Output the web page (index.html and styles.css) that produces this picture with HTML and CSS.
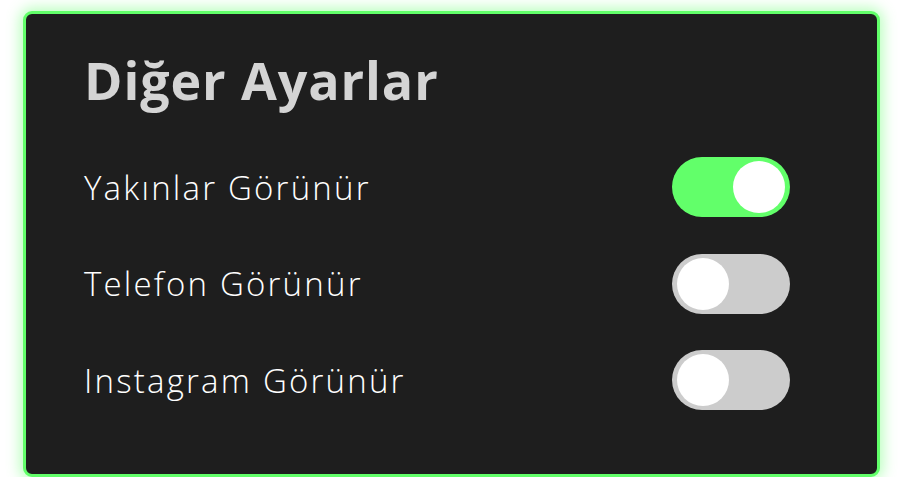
FILE: index.html
```
<!DOCTYPE html>
<html lang="tr">
<head>
<meta charset="utf-8">
<title>Diğer Ayarlar</title>
<link rel="stylesheet" href="styles.css">
</head>
<body>
<div class="card">
  <h1 class="title">Diğer Ayarlar</h1>
  <div class="rows">
    <div class="row">
      <span class="label">Yakınlar Görünür</span>
      <span class="switch on"><span class="knob"></span></span>
    </div>
    <div class="row">
      <span class="label">Telefon Görünür</span>
      <span class="switch"><span class="knob"></span></span>
    </div>
    <div class="row">
      <span class="label">Instagram Görünür</span>
      <span class="switch"><span class="knob"></span></span>
    </div>
  </div>
</div>
</body>
</html>
```
FILE: styles.css
```
html, body {
  margin: 0;
  padding: 0;
  background: #ffffff;
}
body {
  padding: 11px 0 0 23px;
  font-family: "Open Sans", "Liberation Sans", sans-serif;
}
.card {
  box-sizing: border-box;
  width: 857px;
  height: 466px;
  background: #1e1e1e;
  border: 3px solid #62ff6a;
  border-radius: 9px;
  box-shadow: 0 0 14px 3px rgba(98, 255, 106, 0.45);
  padding: 36px 87px 0 58px;
}
.title {
  margin: 0;
  font-size: 52px;
  line-height: 60px;
  font-weight: 700;
  color: #d4d4d4;
  letter-spacing: 0.9px;
}
.rows {
  margin-top: 47px;
  display: flex;
  flex-direction: column;
  gap: 36.5px;
}
.row {
  display: flex;
  align-items: center;
  justify-content: space-between;
  height: 60px;
}
.label {
  color: #ffffff;
  font-size: 33px;
  font-weight: 300;
  letter-spacing: 2.2px;
}
.switch {
  box-sizing: border-box;
  width: 118px;
  height: 60px;
  border-radius: 30px;
  background: #cccccc;
  padding: 4px 5px;
  display: flex;
  justify-content: flex-start;
}
.switch.on {
  background: #62ff6a;
  justify-content: flex-end;
}
.knob {
  width: 52px;
  height: 52px;
  border-radius: 50%;
  background: #ffffff;
}
```
